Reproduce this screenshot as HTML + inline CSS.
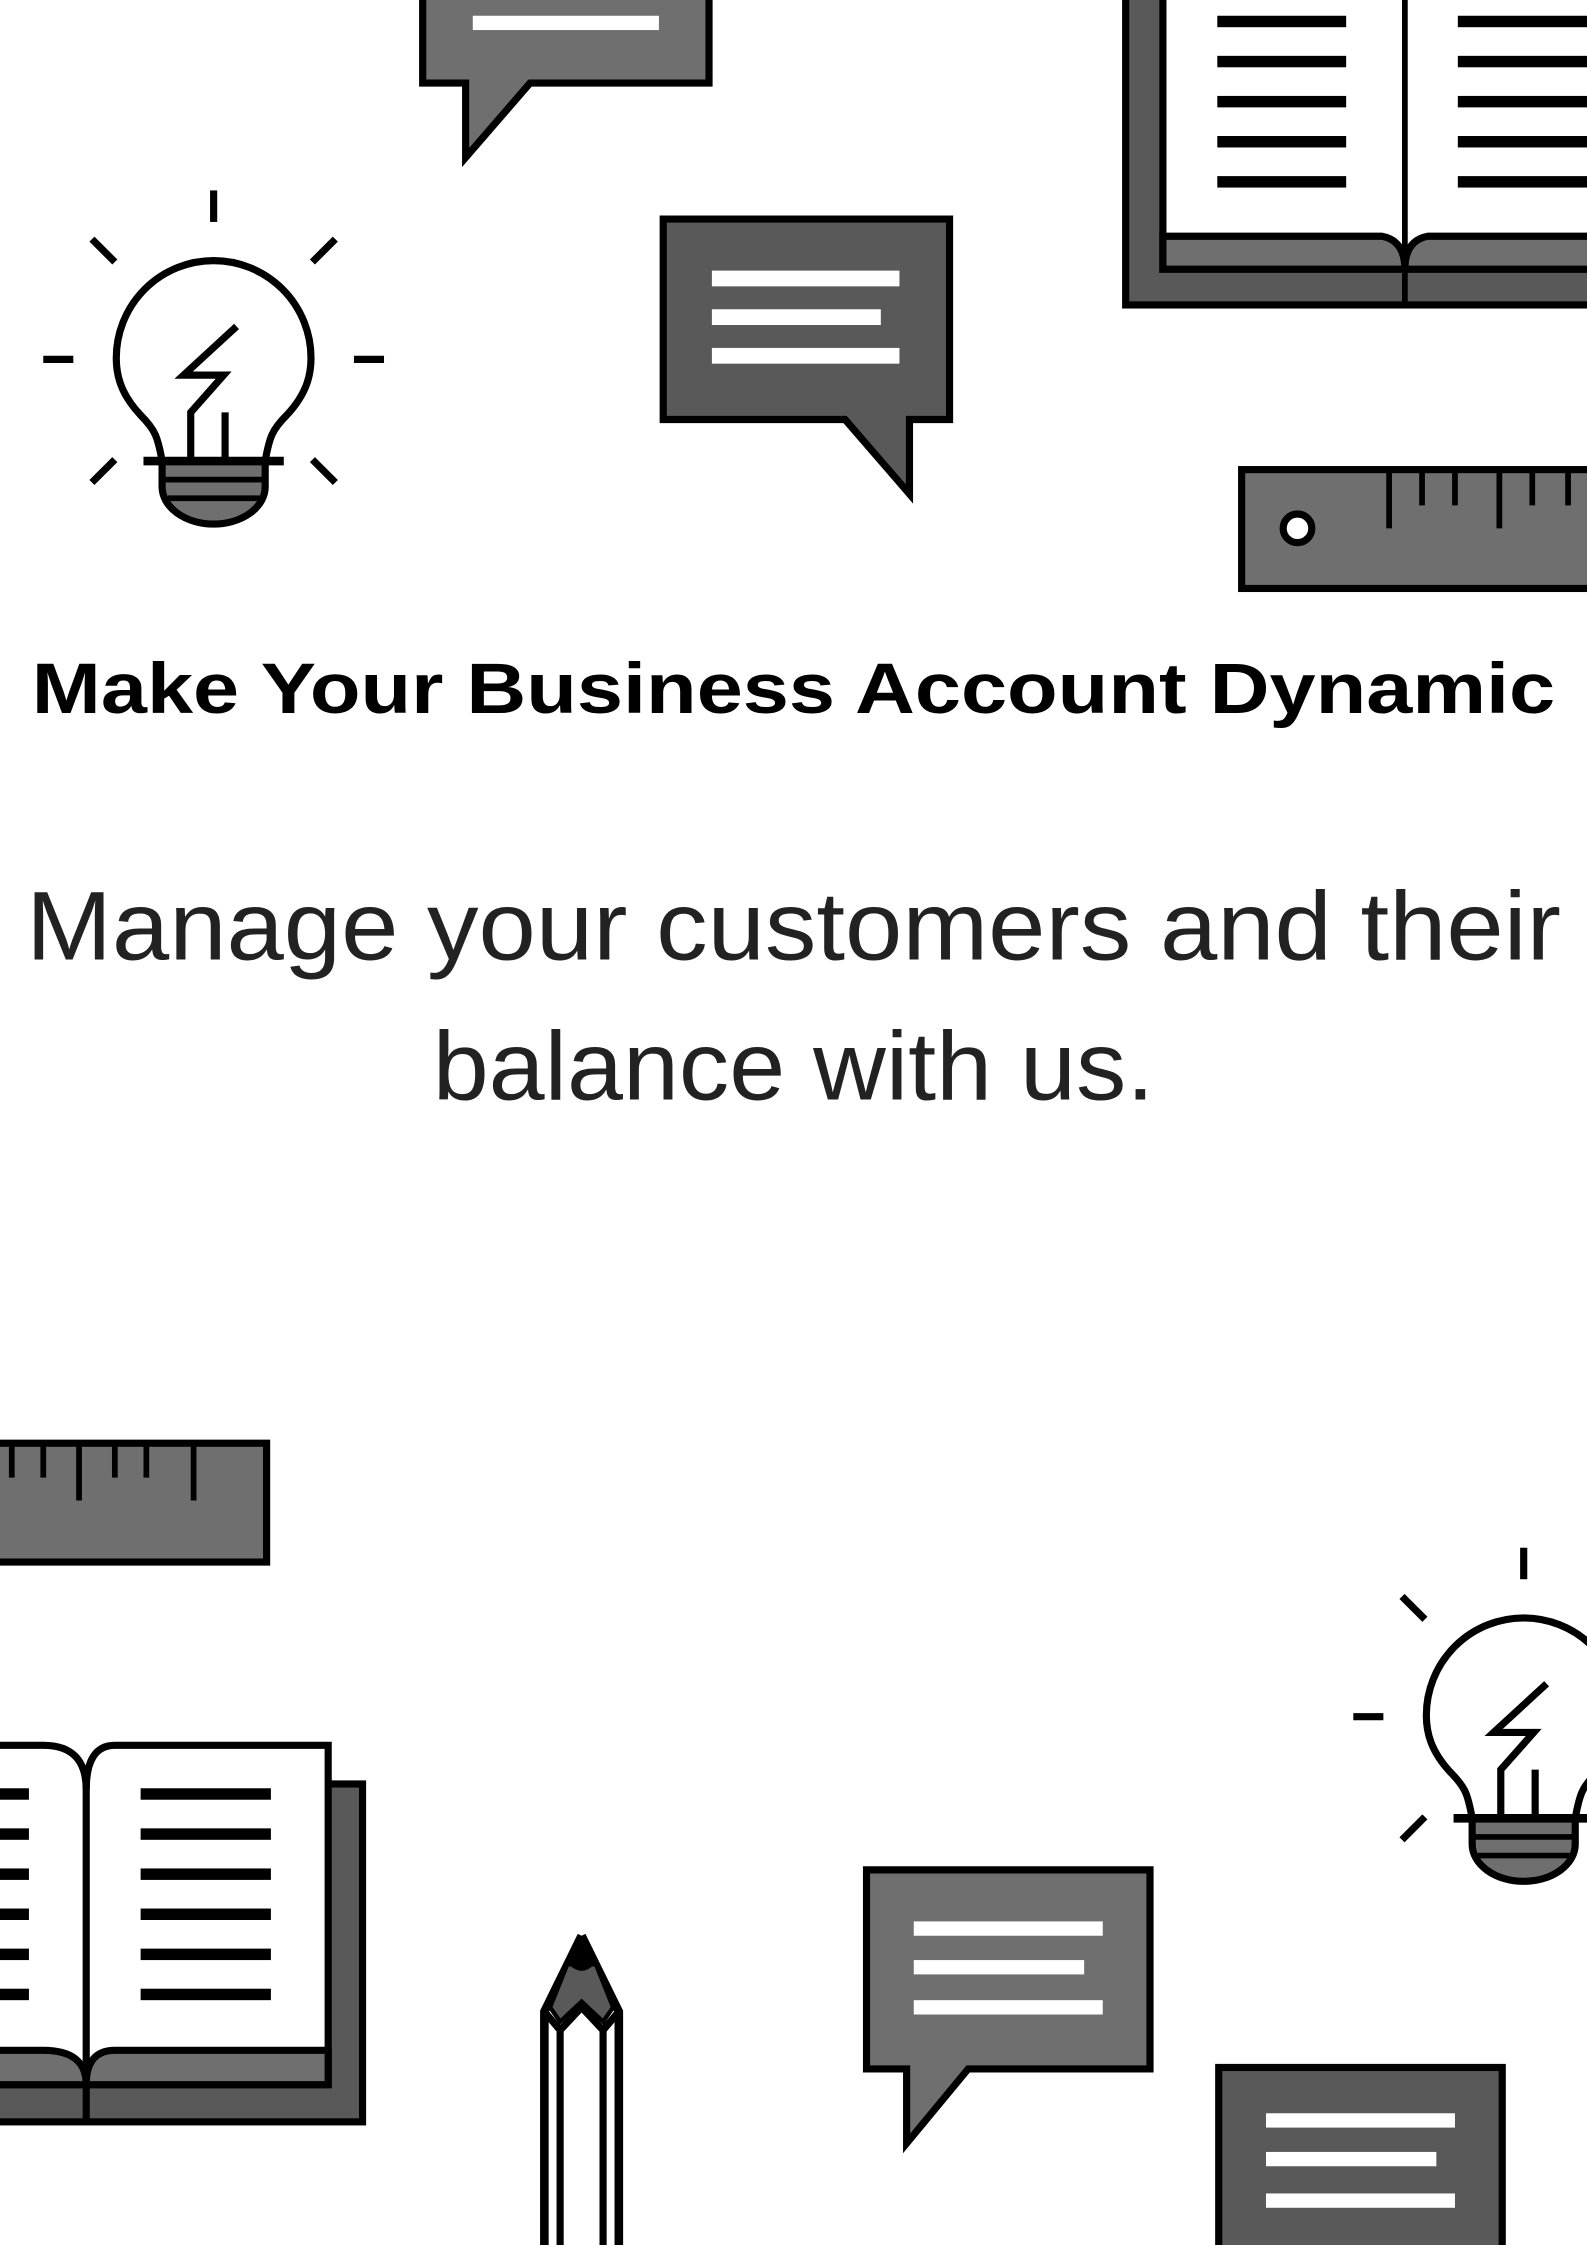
<!DOCTYPE html>
<html><head><meta charset="utf-8"><style>
html,body{margin:0;padding:0;background:#fff;}
svg{display:block;}
</style></head><body>
<svg width="1587" height="2245" viewBox="0 0 1108 1568" xmlns="http://www.w3.org/2000/svg">
<rect width="1108" height="1568" fill="#fff"/>
<defs>
<g id="bulb">
  <g stroke="#000" stroke-width="5" fill="none">
    <line x1="149" y1="133" x2="149" y2="155"/>
    <line x1="64" y1="167" x2="80" y2="183"/>
    <line x1="234" y1="167" x2="218" y2="183"/>
    <line x1="64" y1="337" x2="80" y2="321"/>
    <line x1="234" y1="337" x2="218" y2="321"/>
    <line x1="30" y1="251" x2="51" y2="251"/>
    <line x1="247" y1="251" x2="268" y2="251"/>
  </g>
  <path d="M113,322 L113,340 A36,26 0 0 0 185,340 L185,322 Z" fill="#6f6f6f" stroke="#000" stroke-width="5"/>
  <line x1="115" y1="335" x2="183" y2="335" stroke="#000" stroke-width="4"/>
  <line x1="117" y1="348" x2="181" y2="348" stroke="#000" stroke-width="4"/>
  <path d="M113,322 C110,305 108,300 98,290 C84,275 81,262 81,250 A68,68 0 0 1 217,250 C217,262 214,275 200,290 C190,300 188,305 185,322" fill="none" stroke="#000" stroke-width="5"/>
  <line x1="100" y1="322" x2="198" y2="322" stroke="#000" stroke-width="6"/>
  <path d="M165,228 L128,262 L156,262 L133,288 L133,322" fill="none" stroke="#000" stroke-width="5"/>
  <line x1="157" y1="288" x2="157" y2="322" stroke="#000" stroke-width="5"/>
</g>
</defs>

<path d="M295,-10 H495 V58 H370 L325,110 V58 H295 Z" fill="#6f6f6f" stroke="#000" stroke-width="5"/>
<rect x="330" y="11" width="130" height="10" fill="#fff"/>

<use href="#bulb"/>

<path d="M463,153 H663 V293 H635 V345 L590,293 H463 Z" fill="#595959" stroke="#000" stroke-width="5"/>
<rect x="497" y="189" width="131" height="11" fill="#fff"/>
<rect x="497" y="216" width="118" height="11" fill="#fff"/>
<rect x="497" y="243" width="131" height="11" fill="#fff"/>

<rect x="786" y="-10" width="330" height="223" fill="#595959" stroke="#000" stroke-width="5"/>
<path d="M812,-10 V188 H1116 V-10" fill="#fff" stroke="#000" stroke-width="5"/>
<path d="M812,165 H965 Q981,168 981,188 Q981,168 997,165 H1116 V188 H812 Z" fill="#6f6f6f" stroke="#000" stroke-width="5"/>
<line x1="981" y1="-10" x2="981" y2="213" stroke="#000" stroke-width="4"/>
<g fill="#000">
<rect x="850" y="11" width="90" height="8"/><rect x="850" y="39" width="90" height="8"/><rect x="850" y="67" width="90" height="8"/><rect x="850" y="95" width="90" height="8"/><rect x="850" y="123" width="90" height="8"/>
<rect x="1018" y="11" width="95" height="8"/><rect x="1018" y="39" width="95" height="8"/><rect x="1018" y="67" width="95" height="8"/><rect x="1018" y="95" width="95" height="8"/><rect x="1018" y="123" width="95" height="8"/>
</g>

<rect x="867" y="328" width="250" height="83" fill="#6f6f6f" stroke="#000" stroke-width="5"/>
<circle cx="906" cy="369" r="10" fill="#fff" stroke="#000" stroke-width="5"/>
<g stroke="#000" stroke-width="4">
<line x1="970" y1="330" x2="970" y2="369"/><line x1="993" y1="330" x2="993" y2="353"/><line x1="1016" y1="330" x2="1016" y2="353"/><line x1="1047" y1="330" x2="1047" y2="369"/><line x1="1070" y1="330" x2="1070" y2="353"/><line x1="1095" y1="330" x2="1095" y2="353"/>
</g>

<text x="554" y="498" text-anchor="middle" font-family="Liberation Sans, sans-serif" font-weight="bold" font-size="50" textLength="1064" lengthAdjust="spacingAndGlyphs" fill="#000">Make Your Business Account Dynamic</text>
<text x="554" y="670" text-anchor="middle" font-family="Liberation Sans, sans-serif" font-size="68" textLength="1072" lengthAdjust="spacingAndGlyphs" fill="#222">Manage your customers and their</text>
<text x="554" y="768" text-anchor="middle" font-family="Liberation Sans, sans-serif" font-size="68" textLength="504" lengthAdjust="spacingAndGlyphs" fill="#222">balance with us.</text>

<rect x="-10" y="1008" width="196" height="83" fill="#6f6f6f" stroke="#000" stroke-width="5"/>
<g stroke="#000" stroke-width="4">
<line x1="8" y1="1010" x2="8" y2="1032"/><line x1="30" y1="1010" x2="30" y2="1032"/><line x1="55" y1="1010" x2="55" y2="1048"/><line x1="80" y1="1010" x2="80" y2="1032"/><line x1="102" y1="1010" x2="102" y2="1032"/><line x1="135" y1="1010" x2="135" y2="1048"/>
</g>

<rect x="-10" y="1246" width="263" height="236" fill="#595959" stroke="#000" stroke-width="5"/>
<path d="M-10,1219 H30 Q60,1219 60,1250 Q60,1219 80,1219 H229 V1456 H-10 Z" fill="#fff" stroke="#000" stroke-width="5"/>
<path d="M-10,1432 H30 Q60,1432 60,1456 Q60,1432 80,1432 H229 V1456 H-10 Z" fill="#6f6f6f" stroke="#000" stroke-width="5"/>
<line x1="60" y1="1240" x2="60" y2="1482" stroke="#000" stroke-width="5"/>
<g fill="#000">
<rect x="-10" y="1249" width="30" height="8"/><rect x="-10" y="1277" width="30" height="8"/><rect x="-10" y="1305" width="30" height="8"/><rect x="-10" y="1333" width="30" height="8"/><rect x="-10" y="1361" width="30" height="8"/><rect x="-10" y="1389" width="30" height="8"/>
<rect x="98" y="1249" width="91" height="8"/><rect x="98" y="1277" width="91" height="8"/><rect x="98" y="1305" width="91" height="8"/><rect x="98" y="1333" width="91" height="8"/><rect x="98" y="1361" width="91" height="8"/><rect x="98" y="1389" width="91" height="8"/>
</g>

<path d="M406,1352 L380,1405 L380,1575 M406,1352 L432,1405 L432,1575" fill="none" stroke="#000" stroke-width="6"/>
<path d="M396,1372 L416,1372 L428,1402 L421,1412 L406,1398 L391,1412 L384,1402 Z" fill="#595959" stroke="#000" stroke-width="3"/>
<path d="M398,1373 Q406,1380 414,1373 L406,1352 Z" fill="#000"/>
<path d="M380,1405 L391,1418 L406,1402 L421,1418 L432,1405" fill="none" stroke="#000" stroke-width="5"/>
<line x1="391" y1="1418" x2="391" y2="1575" stroke="#000" stroke-width="5"/>
<line x1="421" y1="1418" x2="421" y2="1575" stroke="#000" stroke-width="5"/>

<path d="M605,1306 H803 V1445 H676 L633,1497 V1445 H605 Z" fill="#6f6f6f" stroke="#000" stroke-width="5"/>
<rect x="638" y="1342" width="132" height="10" fill="#fff"/>
<rect x="638" y="1369" width="119" height="10" fill="#fff"/>
<rect x="638" y="1397" width="132" height="10" fill="#fff"/>

<rect x="851" y="1444" width="198" height="140" fill="#595959" stroke="#000" stroke-width="5"/>
<rect x="884" y="1476" width="132" height="10" fill="#fff"/>
<rect x="884" y="1503" width="119" height="10" fill="#fff"/>
<rect x="884" y="1532" width="132" height="10" fill="#fff"/>

<use href="#bulb" transform="translate(915,948)"/>
</svg>
</body></html>
